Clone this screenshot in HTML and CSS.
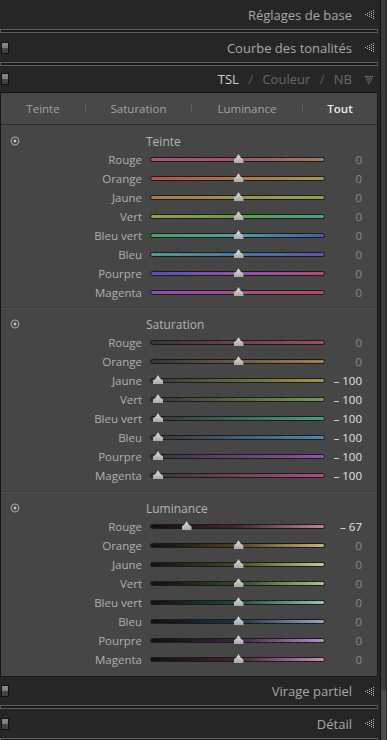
FILE: index.html
```html
<!DOCTYPE html>
<html lang="fr">
<head>
    <meta charset="UTF-8">
    <title>TSL / Couleur / NB</title>
    <link rel="stylesheet" href="styles.css">
</head>
<body>
<div class="app">
    <div class="main">
        <div class="header header-first">
            <span class="title">Réglages de base</span>
            <svg class="arrow" width="10" height="9" viewBox="0 0 10 9"><g fill="#bdbdbd"><rect x="1" y="4" width="1" height="1"/><rect x="3" y="3" width="1" height="1"/><rect x="3" y="5" width="1" height="1"/><rect x="5" y="2" width="1" height="1"/><rect x="5" y="4" width="1" height="1"/><rect x="5" y="6" width="1" height="1"/><rect x="7" y="1" width="1" height="1"/><rect x="7" y="3" width="1" height="1"/><rect x="7" y="5" width="1" height="1"/><rect x="7" y="7" width="1" height="1"/><rect x="9" y="0" width="1" height="1"/><rect x="9" y="2" width="1" height="1"/><rect x="9" y="4" width="1" height="1"/><rect x="9" y="6" width="1" height="1"/><rect x="9" y="8" width="1" height="1"/></g></svg>
        </div>
        <div class="sep"></div>
        <div class="header">
            <span class="switch"></span>
            <span class="title">Courbe des tonalités</span>
            <svg class="arrow" width="10" height="9" viewBox="0 0 10 9"><g fill="#bdbdbd"><rect x="1" y="4" width="1" height="1"/><rect x="3" y="3" width="1" height="1"/><rect x="3" y="5" width="1" height="1"/><rect x="5" y="2" width="1" height="1"/><rect x="5" y="4" width="1" height="1"/><rect x="5" y="6" width="1" height="1"/><rect x="7" y="1" width="1" height="1"/><rect x="7" y="3" width="1" height="1"/><rect x="7" y="5" width="1" height="1"/><rect x="7" y="7" width="1" height="1"/><rect x="9" y="0" width="1" height="1"/><rect x="9" y="2" width="1" height="1"/><rect x="9" y="4" width="1" height="1"/><rect x="9" y="6" width="1" height="1"/><rect x="9" y="8" width="1" height="1"/></g></svg>
        </div>
        <div class="sep"></div>
        <div class="header header-open">
            <span class="switch"></span>
            <span class="title"><span class="on">TSL</span> <span class="slash">/</span> Couleur <span class="slash">/</span> NB</span>
            <svg class="arrow" width="10" height="9" viewBox="0 0 9 10"><g fill="#bdbdbd"><rect x="0" y="1" width="1" height="1"/><rect x="2" y="1" width="1" height="1"/><rect x="4" y="1" width="1" height="1"/><rect x="6" y="1" width="1" height="1"/><rect x="8" y="1" width="1" height="1"/><rect x="1" y="3" width="1" height="1"/><rect x="3" y="3" width="1" height="1"/><rect x="5" y="3" width="1" height="1"/><rect x="7" y="3" width="1" height="1"/><rect x="2" y="5" width="1" height="1"/><rect x="4" y="5" width="1" height="1"/><rect x="6" y="5" width="1" height="1"/><rect x="3" y="7" width="1" height="1"/><rect x="5" y="7" width="1" height="1"/><rect x="4" y="9" width="1" height="1"/></g></svg>
        </div>

        <div class="panel">
            <div class="tabs">
                <span class="tab tab-1">Teinte</span>
                <span class="tab-sep"></span>
                <span class="tab tab-2">Saturation</span>
                <span class="tab-sep"></span>
                <span class="tab tab-3">Luminance</span>
                <span class="tab-sep"></span>
                <span class="tab tab-active">Tout</span>
            </div>

            <!-- Teinte -->
            <div class="group">
                <div class="group-head">
                    <svg class="target" width="10" height="10" viewBox="0 0 10 10"><circle cx="5" cy="5" r="3.8" fill="none" stroke="#9a9a9a" stroke-width="1.3"/><circle cx="5" cy="5" r="1.4" fill="#c4c4c4"/></svg>
                    <span class="group-title">Teinte</span>
                </div>
                <div class="row"><span class="label">Rouge</span><div class="track h-rouge"><span class="knob" style="left: 50%"></span></div><span class="value">0</span></div>
                <div class="row"><span class="label">Orange</span><div class="track h-orange"><span class="knob" style="left: 50%"></span></div><span class="value">0</span></div>
                <div class="row"><span class="label">Jaune</span><div class="track h-jaune"><span class="knob" style="left: 50%"></span></div><span class="value">0</span></div>
                <div class="row"><span class="label">Vert</span><div class="track h-vert"><span class="knob" style="left: 50%"></span></div><span class="value">0</span></div>
                <div class="row"><span class="label">Bleu vert</span><div class="track h-bleuvert"><span class="knob" style="left: 50%"></span></div><span class="value">0</span></div>
                <div class="row"><span class="label">Bleu</span><div class="track h-bleu"><span class="knob" style="left: 50%"></span></div><span class="value">0</span></div>
                <div class="row"><span class="label">Pourpre</span><div class="track h-pourpre"><span class="knob" style="left: 50%"></span></div><span class="value">0</span></div>
                <div class="row"><span class="label">Magenta</span><div class="track h-magenta"><span class="knob" style="left: 50%"></span></div><span class="value">0</span></div>
            </div>

            <!-- Saturation -->
            <div class="group">
                <div class="group-head">
                    <svg class="target" width="10" height="10" viewBox="0 0 10 10"><circle cx="5" cy="5" r="3.8" fill="none" stroke="#9a9a9a" stroke-width="1.3"/><circle cx="5" cy="5" r="1.4" fill="#c4c4c4"/></svg>
                    <span class="group-title">Saturation</span>
                </div>
                <div class="row"><span class="label">Rouge</span><div class="track s-rouge"><span class="knob" style="left: 50%"></span></div><span class="value">0</span></div>
                <div class="row"><span class="label">Orange</span><div class="track s-orange"><span class="knob" style="left: 50%"></span></div><span class="value">0</span></div>
                <div class="row"><span class="label">Jaune</span><div class="track s-jaune"><span class="knob" style="left: 0%"></span></div><span class="value changed">– 100</span></div>
                <div class="row"><span class="label">Vert</span><div class="track s-vert"><span class="knob" style="left: 0%"></span></div><span class="value changed">– 100</span></div>
                <div class="row"><span class="label">Bleu vert</span><div class="track s-bleuvert"><span class="knob" style="left: 0%"></span></div><span class="value changed">– 100</span></div>
                <div class="row"><span class="label">Bleu</span><div class="track s-bleu"><span class="knob" style="left: 0%"></span></div><span class="value changed">– 100</span></div>
                <div class="row"><span class="label">Pourpre</span><div class="track s-pourpre"><span class="knob" style="left: 0%"></span></div><span class="value changed">– 100</span></div>
                <div class="row"><span class="label">Magenta</span><div class="track s-magenta"><span class="knob" style="left: 0%"></span></div><span class="value changed">– 100</span></div>
            </div>

            <!-- Luminance -->
            <div class="group">
                <div class="group-head">
                    <svg class="target" width="10" height="10" viewBox="0 0 10 10"><circle cx="5" cy="5" r="3.8" fill="none" stroke="#9a9a9a" stroke-width="1.3"/><circle cx="5" cy="5" r="1.4" fill="#c4c4c4"/></svg>
                    <span class="group-title">Luminance</span>
                </div>
                <div class="row"><span class="label">Rouge</span><div class="track l-rouge"><span class="knob" style="left: 16.5%"></span></div><span class="value changed">– 67</span></div>
                <div class="row"><span class="label">Orange</span><div class="track l-orange"><span class="knob" style="left: 50%"></span></div><span class="value">0</span></div>
                <div class="row"><span class="label">Jaune</span><div class="track l-jaune"><span class="knob" style="left: 50%"></span></div><span class="value">0</span></div>
                <div class="row"><span class="label">Vert</span><div class="track l-vert"><span class="knob" style="left: 50%"></span></div><span class="value">0</span></div>
                <div class="row"><span class="label">Bleu vert</span><div class="track l-bleuvert"><span class="knob" style="left: 50%"></span></div><span class="value">0</span></div>
                <div class="row"><span class="label">Bleu</span><div class="track l-bleu"><span class="knob" style="left: 50%"></span></div><span class="value">0</span></div>
                <div class="row"><span class="label">Pourpre</span><div class="track l-pourpre"><span class="knob" style="left: 50%"></span></div><span class="value">0</span></div>
                <div class="row"><span class="label">Magenta</span><div class="track l-magenta"><span class="knob" style="left: 50%"></span></div><span class="value">0</span></div>
            </div>
        </div>

        <div class="header header-after">
            <span class="switch"></span>
            <span class="title">Virage partiel</span>
            <svg class="arrow" width="10" height="9" viewBox="0 0 10 9"><g fill="#bdbdbd"><rect x="1" y="4" width="1" height="1"/><rect x="3" y="3" width="1" height="1"/><rect x="3" y="5" width="1" height="1"/><rect x="5" y="2" width="1" height="1"/><rect x="5" y="4" width="1" height="1"/><rect x="5" y="6" width="1" height="1"/><rect x="7" y="1" width="1" height="1"/><rect x="7" y="3" width="1" height="1"/><rect x="7" y="5" width="1" height="1"/><rect x="7" y="7" width="1" height="1"/><rect x="9" y="0" width="1" height="1"/><rect x="9" y="2" width="1" height="1"/><rect x="9" y="4" width="1" height="1"/><rect x="9" y="6" width="1" height="1"/><rect x="9" y="8" width="1" height="1"/></g></svg>
        </div>
        <div class="sep"></div>
        <div class="header">
            <span class="switch"></span>
            <span class="title">Détail</span>
            <svg class="arrow" width="10" height="9" viewBox="0 0 10 9"><g fill="#bdbdbd"><rect x="1" y="4" width="1" height="1"/><rect x="3" y="3" width="1" height="1"/><rect x="3" y="5" width="1" height="1"/><rect x="5" y="2" width="1" height="1"/><rect x="5" y="4" width="1" height="1"/><rect x="5" y="6" width="1" height="1"/><rect x="7" y="1" width="1" height="1"/><rect x="7" y="3" width="1" height="1"/><rect x="7" y="5" width="1" height="1"/><rect x="7" y="7" width="1" height="1"/><rect x="9" y="0" width="1" height="1"/><rect x="9" y="2" width="1" height="1"/><rect x="9" y="4" width="1" height="1"/><rect x="9" y="6" width="1" height="1"/><rect x="9" y="8" width="1" height="1"/></g></svg>
        </div>
        <div class="sep"></div>
    </div>
    <div class="scrollbar"><div class="scroll-thumb"></div></div>
</div>
</body>
</html>
```

FILE: styles.css
```css
*{
    margin: 0;
    padding: 0;
    box-sizing: border-box;
}
html, body{
    width: 387px;
    height: 740px;
    overflow: hidden;
    background: #262626;
}
body{
    font-family: "Open Sans", "Noto Sans", sans-serif;
    color: #a6a6a6;
}
.app{
    display: flex;
    height: 740px;
}
.main{
    width: 381px;
    background: #262626;
    border-right: 1px solid #121212;
    display: flex;
    flex-direction: column;
}
.scrollbar{
    width: 5px;
    background: #3a3a3a;
    display: flex;
    flex-direction: column;
    justify-content: flex-end;
}
.scroll-thumb{
    height: 50px;
    background: #4c4c4c;
}

/* panel headers */
.header{
    height: 29px;
    flex-shrink: 0;
    display: flex;
    align-items: center;
    padding-right: 6px;
}
.header-open{
    height: 26px;
}
.header-after{
    height: 28px;
}
.title{
    margin-left: auto;
    margin-right: 12px;
    font-size: 13px;
    color: #a8a8a8;
}
.header-open .title{
    color: #686868;
}
.header-open .title .on{
    color: #d0d0d0;
}
.slash{
    margin: 0 6px;
    color: #5c5c5c;
}
.arrow{
    display: block;
}
.switch{
    width: 8px;
    height: 12px;
    margin-left: 1px;
    border: 1px solid #111111;
    background: linear-gradient(#8c8c8c 0, #7a7a7a 45%, #474747 50%, #3e3e3e 100%);
}
.sep{
    width: 378px;
    height: 4px;
    flex-shrink: 0;
    border: 1px solid #5c5c5c;
    background: #1a1a1a;
}

/* open panel */
.panel{
    width: 378px;
    height: 585px;
    flex-shrink: 0;
    background: #464646;
    border: 1px solid #161616;
}
.tabs{
    height: 32px;
    display: flex;
    align-items: center;
    background: #484848;
    border-bottom: 1px solid #2c2c2c;
    font-size: 11.5px;
    color: #a2a2a2;
}
.tab{
    text-align: center;
}
.tab-1{ width: 84px; }
.tab-2{ width: 105px; }
.tab-3{ width: 110px; }
.tab-active{
    flex: 1;
    color: #ececec;
    font-weight: 600;
}
.tab-sep{
    width: 1px;
    height: 9px;
    background: #5e5e5e;
}

.group{
    height: 183px;
    padding-top: 7px;
    border-bottom: 1px solid #3a3a3a;
    box-shadow: 0 1px 0 #505050;
}
.group + .group{
    height: 184px;
}
.group:last-child{
    border-bottom: none;
    box-shadow: none;
}
.group-head{
    height: 18px;
    display: flex;
    align-items: center;
}
.target{
    margin-left: 9px;
}
.group-title{
    margin-left: 126px;
    font-size: 12px;
    color: #b4b4b4;
}

.row{
    height: 19px;
    display: flex;
    align-items: center;
}
.label{
    width: 141px;
    text-align: right;
    font-size: 11.5px;
    color: #b0b0b0;
}
.track{
    position: relative;
    width: 175px;
    height: 5px;
    margin-left: 8px;
    border: 1px solid #1c1c1c;
    border-radius: 3px;
}
.track::before{
    /* tick marks over the track */
    content: "";
    position: absolute;
    left: 4px;
    right: 4px;
    top: -5px;
    height: 2px;
    background: repeating-linear-gradient(90deg, #3a3a3a 0 1px, transparent 1px 20.75px);
}
.knob{
    position: absolute;
    top: -4px;
    width: 10px;
    height: 9px;
    margin-left: 2px;
    filter: drop-shadow(0 0 0.6px #151515);
}
.knob::after{
    content: "";
    position: absolute;
    inset: 0;
    background: linear-gradient(#e0e0e0, #a8a8a8);
    clip-path: polygon(50% 0, 70% 35%, 100% 60%, 100% 100%, 0 100%, 0 60%, 30% 35%);
}
.track .knob[style*="50%"]{
    margin-left: -4px;
}
.value{
    width: 37px;
    text-align: right;
    font-size: 11.5px;
    color: #8a8a8a;
}
.value.changed{
    color: #e4e4e4;
}

/* hue gradients */
.h-rouge{ background: linear-gradient(90deg, #a85084, #a85064 45%, #9c7c5a); }
.h-orange{ background: linear-gradient(90deg, #b45252, #b47248 50%, #9c9c54); }
.h-jaune{ background: linear-gradient(90deg, #a87a54, #a0904c 50%, #94a04c); }
.h-vert{ background: linear-gradient(90deg, #9c9c48, #64a04c 50%, #48a08c); }
.h-bleuvert{ background: linear-gradient(90deg, #48a064, #48a0a0 50%, #485cac); }
.h-bleu{ background: linear-gradient(90deg, #48a090, #4874ac 50%, #6054ac); }
.h-pourpre{ background: linear-gradient(90deg, #5454ac, #8c54ac 50%, #ac4c70); }
.h-magenta{ background: linear-gradient(90deg, #8c4cb0, #ac4c8c 50%, #ac4c5c); }

/* saturation gradients */
.s-rouge{ background: linear-gradient(90deg, #363636, #a44c5c); }
.s-orange{ background: linear-gradient(90deg, #363636, #a4804c); }
.s-jaune{ background: linear-gradient(90deg, #363636, #9c984c); }
.s-vert{ background: linear-gradient(90deg, #363636, #70a044); }
.s-bleuvert{ background: linear-gradient(90deg, #363636, #44a088); }
.s-bleu{ background: linear-gradient(90deg, #363636, #4c88b4); }
.s-pourpre{ background: linear-gradient(90deg, #363636, #9054ac); }
.s-magenta{ background: linear-gradient(90deg, #363636, #b44c80); }

/* luminance gradients */
.l-rouge{ background: linear-gradient(90deg, #101010, #502028 50%, #c88090); }
.l-orange{ background: linear-gradient(90deg, #101010, #504020 50%, #c8b080); }
.l-jaune{ background: linear-gradient(90deg, #101010, #484820 50%, #c8c890); }
.l-vert{ background: linear-gradient(90deg, #101010, #304820 50%, #a0c890); }
.l-bleuvert{ background: linear-gradient(90deg, #101010, #204840 50%, #90c8b8); }
.l-bleu{ background: linear-gradient(90deg, #101010, #203048 50%, #90a8c8); }
.l-pourpre{ background: linear-gradient(90deg, #101010, #402048 50%, #b890c8); }
.l-magenta{ background: linear-gradient(90deg, #101010, #482038 50%, #c890b0); }
```
